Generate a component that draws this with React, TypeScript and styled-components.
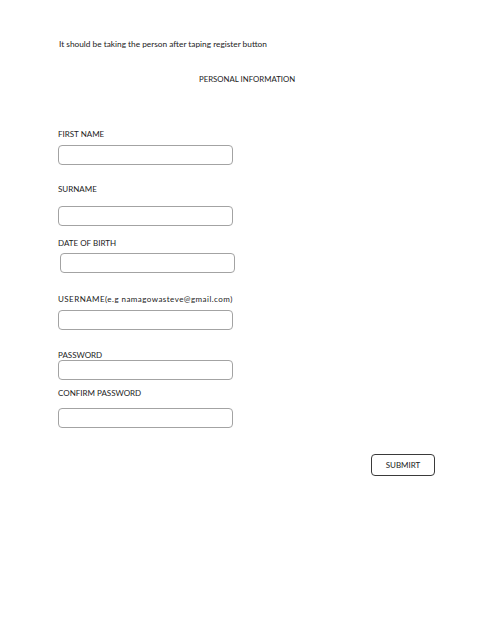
import React from "react";
import styled, { createGlobalStyle } from "styled-components";

const GlobalStyle = createGlobalStyle`
  html, body {
    margin: 0;
    padding: 0;
    background: #ffffff;
  }
  body {
    font-family: Lato, "Open Sans", "Liberation Sans", sans-serif;
    color: #222222;
  }
`;

const Page = styled.div`
  width: 485px;
  min-height: 622px;
  box-sizing: border-box;
  padding: 38px 0 0 58px;
  display: flex;
  flex-direction: column;
  align-items: flex-start;
`;

const Note = styled.p`
  margin: 0 0 0 1px;
  font-size: 8.3px;
  line-height: 12px;
`;

const Heading = styled.h2`
  margin: 23px 0 0 141px;
  font-size: 7.8px;
  line-height: 12px;
  font-weight: 400;
`;

const Field = styled.div<{ $top: number; $gap: number }>`
  display: flex;
  flex-direction: column;
  align-items: flex-start;
  gap: ${(p) => p.$gap}px;
  margin-top: ${(p) => p.$top}px;
`;

const Label = styled.label<{ $wide?: boolean }>`
  font-size: 8px;
  line-height: 10px;
  padding-top: 1px;
  letter-spacing: ${(p) => (p.$wide ? "0.45px" : "0")};
`;

const Input = styled.input<{ $indent?: number }>`
  box-sizing: border-box;
  width: 175px;
  height: 20px;
  margin: 0 0 0 ${(p) => p.$indent ?? 0}px;
  border: 1px solid #a3a3a3;
  border-radius: 4px;
  background: #ffffff;
  padding: 0 6px;
  font: inherit;
  font-size: 9px;
  outline: none;
`;

const Actions = styled.div`
  display: flex;
  justify-content: flex-end;
  width: 377px;
  margin-top: 26px;
`;

const SubmitButton = styled.button`
  box-sizing: border-box;
  width: 64px;
  height: 22px;
  border: 1px solid #3a3a3a;
  border-radius: 4px;
  background: #ffffff;
  color: #222222;
  font-family: inherit;
  font-size: 8px;
  padding: 0;
  cursor: pointer;
`;

type FieldDef = {
  label: string;
  top: number;
  gap: number;
  indent?: number;
  type?: string;
  wide?: boolean;
};

const fields: FieldDef[] = [
  { label: "FIRST NAME", top: 43, gap: 6 },
  { label: "SURNAME", top: 18, gap: 12 },
  { label: "DATE OF BIRTH", top: 11, gap: 5, indent: 2 },
  { label: "USERNAME(e.g namagowasteve@gmail.com)", top: 20, gap: 6, wide: true },
  { label: "PASSWORD", top: 19, gap: 0, type: "password" },
  { label: "CONFIRM PASSWORD", top: 7, gap: 10, type: "password" },
];

export default function App() {
  return (
    <>
      <GlobalStyle />
      <Page>
        <Note>It should be taking the person after taping register button</Note>
        <Heading>PERSONAL INFORMATION</Heading>
        {fields.map((f) => (
          <Field key={f.label} $top={f.top} $gap={f.gap}>
            <Label $wide={f.wide}>{f.label}</Label>
            <Input type={f.type ?? "text"} $indent={f.indent} />
          </Field>
        ))}
        <Actions>
          <SubmitButton>SUBMIRT</SubmitButton>
        </Actions>
      </Page>
    </>
  );
}
